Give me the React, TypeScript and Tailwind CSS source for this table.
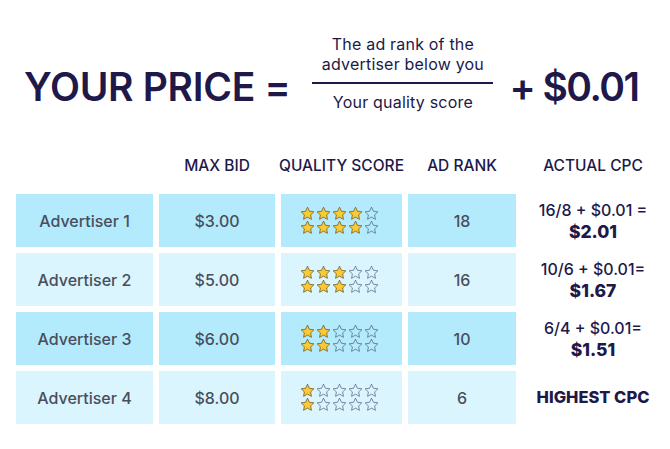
import React from "react";

const rows = [
  { name: "Advertiser 1", bid: "$3.00", stars: 4, rank: "18", calc: "16/8 + $0.01 =", price: "$2.01", dark: true },
  { name: "Advertiser 2", bid: "$5.00", stars: 3, rank: "16", calc: "10/6 + $0.01=", price: "$1.67", dark: false },
  { name: "Advertiser 3", bid: "$6.00", stars: 2, rank: "10", calc: "6/4 + $0.01=", price: "$1.51", dark: true },
  { name: "Advertiser 4", bid: "$8.00", stars: 1, rank: "6", calc: "", price: "", dark: false },
];

function Star({ filled }: { filled: boolean }) {
  return (
    <svg width="15" height="15" viewBox="0 0 24 24">
      <path
        d="M12 1.8l3.1 6.6 7.1.9-5.2 4.9 1.3 7.1L12 17.8l-6.3 3.5 1.3-7.1-5.2-4.9 7.1-.9z"
        fill={filled ? "#fbc936" : "none"}
        stroke={filled ? "#6b5520" : "#3f4a6e"}
        strokeWidth={filled ? 1.2 : 1}
        strokeLinejoin="round"
      />
    </svg>
  );
}

function Stars({ count }: { count: number }) {
  const line = (
    <div className="flex gap-[1px]">
      {[0, 1, 2, 3, 4].map((i) => (
        <Star key={i} filled={i < count} />
      ))}
    </div>
  );
  return (
    <div className="flex flex-col -space-y-[1px] ml-[-4px]">
      {line}
      {line}
    </div>
  );
}

export default function App() {
  const cell = "flex items-center justify-center h-[53px] text-[16px] font-medium text-[#4a4d5c]";
  return (
    <div className="w-[670px] h-[449px] bg-white overflow-hidden" style={{ fontFamily: "Inter, 'Noto Sans', sans-serif" }}>
      {/* formula */}
      <div className="flex items-start pl-[24px] h-[134px] text-[#21184a] whitespace-nowrap">
        <div className="mt-[67px] text-[39px] font-semibold leading-none tracking-[-0.3px]">YOUR PRICE =</div>
        <div className="flex flex-col items-center mt-[34px] ml-[22px] w-[181px]">
          <div className="text-[16px] leading-[20px] text-center tracking-[0.2px]">
            The ad rank of the
            <br />
            advertiser below you
          </div>
          <div className="w-full h-[2px] bg-[#21184a] my-[8px]" />
          <div className="text-[16px] leading-[20px] tracking-[0.2px]">Your quality score</div>
        </div>
        <div className="mt-[67px] ml-[16px] text-[39px] font-semibold leading-none tracking-[-1.5px]">+ $0.01</div>
      </div>

      {/* table */}
      <div className="grid grid-cols-[137px_116px_121px_108px_142px] gap-[6px] pl-[16px]">
        <div className="h-[54px]" />
        {["MAX BID", "QUALITY SCORE", "AD RANK", "ACTUAL CPC"].map((h) => (
          <div key={h} className="h-[54px] flex items-start pt-[20px] justify-center text-[15.5px] font-medium text-[#21184a] whitespace-nowrap">
            {h}
          </div>
        ))}
        {rows.map((r) => {
          const bg = r.dark ? "bg-[#b3ebfc]" : "bg-[#daf5fd]";
          return (
            <React.Fragment key={r.name}>
              <div className={`${cell} ${bg}`}>{r.name}</div>
              <div className={`${cell} ${bg}`}>{r.bid}</div>
              <div className={`${cell} ${bg}`}>
                <Stars count={r.stars} />
              </div>
              <div className={`${cell} ${bg}`}>{r.rank}</div>
              <div className="flex flex-col items-center justify-center h-[53px] text-[#21184a] whitespace-nowrap">
                {r.calc ? (
                  <>
                    <div className="text-[16px] font-medium leading-[22px]">{r.calc}</div>
                    <div className="text-[17.5px] font-extrabold leading-[22px]">{r.price}</div>
                  </>
                ) : (
                  <div className="text-[16.5px] font-extrabold">HIGHEST CPC</div>
                )}
              </div>
            </React.Fragment>
          );
        })}
      </div>
    </div>
  );
}
